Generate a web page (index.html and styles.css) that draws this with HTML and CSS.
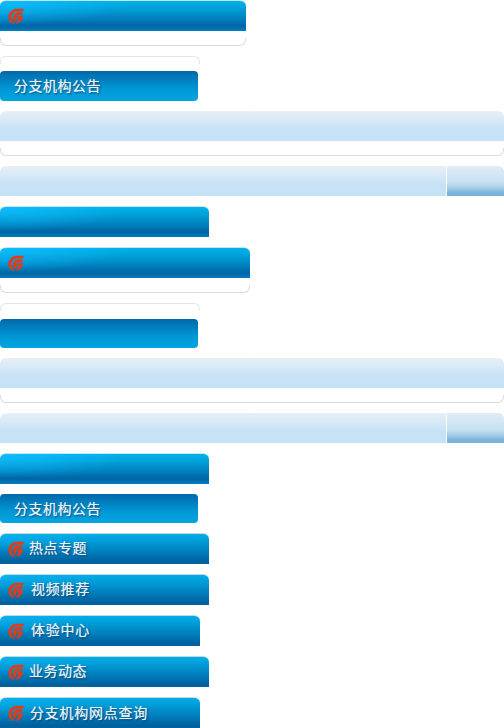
FILE: index.html
```html
<!DOCTYPE html>
<html lang="zh">
<head>
<meta charset="utf-8">
<title>分支机构</title>
<link rel="stylesheet" href="styles.css">
</head>
<body>
<svg class="defs" width="0" height="0" aria-hidden="true">
  <symbol id="logo" viewBox="0 0 16 16">
    <path class="logo-part" d="M15.600 1L14.700 3.200H9C6.500 3.200 4 5 3.200 8C2.600 10.500 3.400 12.600 5 13.800L6.800 15.700C3 15.800 .5 13 .6 9C.8 4.500 4.500 1 9 1Z"/>
    <path class="logo-part" d="M14.600 4.600L13.900 6.800H10.600C9.500 6.800 8.800 7.600 8.400 8.800L7.100 13.900C5.500 12.800 4.800 11 5.200 8.800C5.800 6.300 7.500 4.600 9.500 4.600Z"/>
    <path class="logo-part" d="M9.800 8.300H14.700C14.400 12 12 15 8.500 15.700L9.300 12.800C10.500 12.300 11 11.500 11.300 10.500H9.300Z"/>
  </symbol>
</svg>
<div class="page">
  <section class="panel panel-246">
    <div class="bar bar-bright"><svg class="logo"><use href="#logo"/></svg></div>
    <div class="panel-foot"></div>
  </section>
  <section class="group-198">
    <div class="outline-top"></div>
    <div class="bar bar-deep"><span class="title title-first">分支机构公告</span></div>
  </section>
  <section class="panel">
    <div class="bar bar-pale"></div>
    <div class="panel-foot"></div>
  </section>
  <section class="bar bar-pale bar-tabbed"><div class="tab"></div></section>
  <section class="bar bar-bright w-209"></section>
  <section class="panel panel-250">
    <div class="bar bar-bright"><svg class="logo"><use href="#logo"/></svg></div>
    <div class="panel-foot"></div>
  </section>
  <section class="group-198">
    <div class="outline-top outline-tall"></div>
    <div class="bar bar-deep bar-short"></div>
  </section>
  <section class="panel">
    <div class="bar bar-pale"></div>
    <div class="panel-foot"></div>
  </section>
  <section class="bar bar-pale bar-tabbed"><div class="tab"></div></section>
  <section class="bar bar-bright w-209"></section>
  <section class="bar bar-deep bar-short w-198"><span class="title title-first">分支机构公告</span></section>
  <section class="bar bar-bright bar-muted w-209"><svg class="logo"><use href="#logo"/></svg><span class="title title-a">热点专题</span></section>
  <section class="bar bar-bright bar-muted w-209"><svg class="logo"><use href="#logo"/></svg><span class="title title-c">视频推荐</span></section>
  <section class="bar bar-bright bar-muted w-200"><svg class="logo"><use href="#logo"/></svg><span class="title title-c">体验中心</span></section>
  <section class="bar bar-bright bar-muted w-209"><svg class="logo"><use href="#logo"/></svg><span class="title title-a">业务动态</span></section>
  <section class="bar bar-bright bar-muted w-200"><svg class="logo"><use href="#logo"/></svg><span class="title title-b">分支机构网点查询</span></section>
</div>
</body>
</html>
```
FILE: styles.css
```css
* { box-sizing: border-box; }
html, body { margin: 0; padding: 0; background: #fff; }
body { width: 504px; height: 728px; overflow: hidden; font-family: "Noto Sans CJK SC", "Liberation Sans", sans-serif; }
.defs { display: block; height: 0; }
.page { display: flex; flex-direction: column; gap: 10px; }

.w-198 { width: 198px; }
.w-200 { width: 200px; }
.w-209 { width: 209px; }

.bar { display: flex; align-items: center; height: 30px; flex: none; border-radius: 6px 6px 0 0; }
.bar-short { height: 29px; }
.bar-bright {
  height: 31px;
  border-top: 1px solid #c4e6f4;
  background:
    radial-gradient(ellipse 130px 24px at 0 0, rgba(16, 190, 255, .85), rgba(16, 190, 255, 0)),
    linear-gradient(180deg, #00b2ea 0%, #00a0d8 25%, #007fbd 60%, #0064a5 84%, #0080c0 100%);
}
.bar-muted {
  border-top-color: #c2d8e6;
  background:
    radial-gradient(ellipse 90px 18px at 0 0, rgba(16, 180, 245, .6), rgba(16, 180, 245, 0)),
    linear-gradient(180deg, #00ade6 0%, #0098d4 30%, #007cba 62%, #00609f 92%, #00649f 100%);
}
.bar-deep {
  width: 198px;
  border-radius: 4px;
  background: linear-gradient(180deg, #0068a8 0%, #0080c0 30%, #0098d6 62%, #04a5e0 100%);
}
.bar-pale {
  background: linear-gradient(180deg, #e6f0f8 0%, #d8e9f6 30%, #c5e1f5 62%, #c6e2f6 100%);
}
.bar-tabbed { justify-content: flex-end; }
.tab {
  align-self: stretch;
  width: 58px;
  border-left: 1px solid #fff;
  border-radius: 0 6px 0 0;
  background: linear-gradient(180deg, #e0edf6 0%, #c6e0f2 55%, #a9cfe8 72%, #7fb5da 88%, #78b0d6 100%);
}

.panel { display: flex; flex-direction: column; }
.panel-246 { width: 246px; }
.panel-250 { width: 250px; }
.panel-foot { display: flex; flex-direction: column; justify-content: flex-end; height: 15px; }
.panel-foot::after {
  content: "";
  height: 7px;
  border: 1px solid #dcdcdc;
  border-top: 0;
  border-radius: 0 0 6px 6px;
}

.group-198 { display: flex; flex-direction: column; width: 200px; }
.outline-top { height: 15px; }
.outline-tall { height: 16px; }
.outline-top::before {
  content: "";
  display: block;
  height: 7px;
  border: 1px solid #e6e6e6;
  border-bottom: 0;
  border-radius: 6px 6px 0 0;
}

.logo { width: 16px; height: 16px; margin-left: 8px; flex: none; }
.logo-part { fill: #e63a14; stroke: #e63a14; stroke-width: .45; stroke-linejoin: round; }

.title {
  margin-bottom: 4px;
  font-size: 14px;
  line-height: 20px;
  letter-spacing: .5px;
  color: #e8f4fb;
  text-shadow: 0 0 1px rgba(232, 244, 251, .7), 1px 1px 2px rgba(0, 45, 85, .9);
  white-space: nowrap;
}
.title-first { margin-left: 14px; margin-bottom: 2px; }
.title-a { margin-left: 5px; }
.title-b { margin-left: 6px; margin-bottom: 2px; letter-spacing: .75px; }
.title-c { margin-left: 7px; letter-spacing: .75px; }
```
